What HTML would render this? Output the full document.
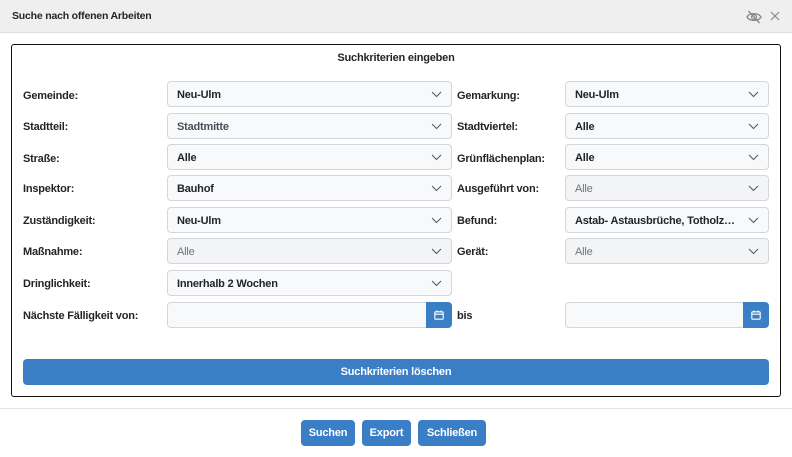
<!DOCTYPE html>
<html><head><meta charset="utf-8"><style>
*{box-sizing:border-box;margin:0;padding:0}
body{width:792px;height:457px;background:#fff;font-family:"Liberation Sans",sans-serif;font-size:11px;color:#212529;position:relative;overflow:hidden;letter-spacing:-0.2px}
.hdr{position:absolute;left:0;top:0;width:792px;height:33px;background:#efefef;border-bottom:1px solid #ddd}
.hdr .t{position:absolute;left:12px;top:10px;font-weight:bold;font-size:10.5px}
.box{position:absolute;left:11px;top:44px;width:770px;height:353px;border:1px solid #111;border-radius:3px}
.ttl{position:absolute;left:0;width:792px;top:52px;text-align:center;font-weight:bold}
.lbl{position:absolute;font-weight:bold;margin-top:1px}
.sel{position:absolute;height:26px;background:#f8f9fa;border:1px solid #d3d6da;border-radius:4px;font-weight:bold;padding:7px 0 0 9px}
.sel.d{color:#6c757d;font-weight:normal;background:#f3f4f5}
.sel svg{position:absolute;right:9px;top:9px}
.sel svg path{stroke:#555;stroke-width:1}
.inp{position:absolute;height:26px;background:#f8f9fa;border:1px solid #d3d6da;border-radius:4px}
.cb{position:absolute;width:26px;height:26px;background:#3a7fc6;border-radius:0 4px 4px 0}
.cb svg{position:absolute;left:8px;top:8px}
.btn{position:absolute;background:#3a7fc6;color:#fff;font-weight:bold;border-radius:4px;text-align:center;line-height:26px;height:26px}
.sep{position:absolute;left:0;top:408px;width:792px;border-top:1px solid #e3e3e3}
</style></head><body>
<div class="hdr"><span class="t">Suche nach offenen Arbeiten</span>
<svg style="position:absolute;left:745px;top:9px" width="18" height="16" viewBox="0 0 18 16" fill="none" stroke="#888" stroke-width="1.3"><path d="M2 8C4.5 3.5 13.5 3.5 16 8C13.5 12.5 4.5 12.5 2 8Z"/><circle cx="9" cy="8" r="2.4"/><path d="M3.5 2L14.5 14"/></svg>
<svg style="position:absolute;left:770px;top:11px" width="10" height="10" viewBox="0 0 10 10" stroke="#888" stroke-width="1.2"><path d="M1 1L9 9M9 1L1 9"/></svg>
</div>
<div class="box"></div>
<div class="ttl">Suchkriterien eingeben</div>

<div class="lbl" style="left:23px;top:89px">Gemeinde:</div>
<div class="lbl" style="left:23px;top:120px">Stadtteil:</div>
<div class="lbl" style="left:23px;top:152px">Straße:</div>
<div class="lbl" style="left:23px;top:182px">Inspektor:</div>
<div class="lbl" style="left:23px;top:214px">Zuständigkeit:</div>
<div class="lbl" style="left:23px;top:245px">Maßnahme:</div>
<div class="lbl" style="left:23px;top:277px">Dringlichkeit:</div>
<div class="lbl" style="left:23px;top:309px">Nächste Fälligkeit von:</div>

<div class="lbl" style="left:457px;top:89px">Gemarkung:</div>
<div class="lbl" style="left:457px;top:120px">Stadtviertel:</div>
<div class="lbl" style="left:457px;top:152px">Grünflächenplan:</div>
<div class="lbl" style="left:457px;top:182px">Ausgeführt von:</div>
<div class="lbl" style="left:457px;top:214px">Befund:</div>
<div class="lbl" style="left:457px;top:245px">Gerät:</div>
<div class="lbl" style="left:457px;top:309px">bis</div>

<div class="sel" style="left:167px;top:81px;width:285px">Neu-Ulm<svg width="11" height="7" viewBox="0 0 11 7" fill="none"><path d="M1 1L5.5 5.5L10 1"/></svg></div>
<div class="sel" style="left:167px;top:113px;width:285px;color:#495057">Stadtmitte<svg width="11" height="7" viewBox="0 0 11 7" fill="none"><path d="M1 1L5.5 5.5L10 1"/></svg></div>
<div class="sel" style="left:167px;top:144px;width:285px">Alle<svg width="11" height="7" viewBox="0 0 11 7" fill="none"><path d="M1 1L5.5 5.5L10 1"/></svg></div>
<div class="sel" style="left:167px;top:175px;width:285px">Bauhof<svg width="11" height="7" viewBox="0 0 11 7" fill="none"><path d="M1 1L5.5 5.5L10 1"/></svg></div>
<div class="sel" style="left:167px;top:207px;width:285px">Neu-Ulm<svg width="11" height="7" viewBox="0 0 11 7" fill="none"><path d="M1 1L5.5 5.5L10 1"/></svg></div>
<div class="sel d" style="left:167px;top:238px;width:285px">Alle<svg width="11" height="7" viewBox="0 0 11 7" fill="none"><path d="M1 1L5.5 5.5L10 1"/></svg></div>
<div class="sel" style="left:167px;top:270px;width:285px">Innerhalb 2 Wochen<svg width="11" height="7" viewBox="0 0 11 7" fill="none"><path d="M1 1L5.5 5.5L10 1"/></svg></div>

<div class="sel" style="left:565px;top:81px;width:204px">Neu-Ulm<svg width="11" height="7" viewBox="0 0 11 7" fill="none"><path d="M1 1L5.5 5.5L10 1"/></svg></div>
<div class="sel" style="left:565px;top:113px;width:204px">Alle<svg width="11" height="7" viewBox="0 0 11 7" fill="none"><path d="M1 1L5.5 5.5L10 1"/></svg></div>
<div class="sel" style="left:565px;top:144px;width:204px">Alle<svg width="11" height="7" viewBox="0 0 11 7" fill="none"><path d="M1 1L5.5 5.5L10 1"/></svg></div>
<div class="sel d" style="left:565px;top:175px;width:204px">Alle<svg width="11" height="7" viewBox="0 0 11 7" fill="none"><path d="M1 1L5.5 5.5L10 1"/></svg></div>
<div class="sel" style="left:565px;top:207px;width:204px">Astab- Astausbrüche, Totholz…<svg width="11" height="7" viewBox="0 0 11 7" fill="none"><path d="M1 1L5.5 5.5L10 1"/></svg></div>
<div class="sel d" style="left:565px;top:238px;width:204px">Alle<svg width="11" height="7" viewBox="0 0 11 7" fill="none"><path d="M1 1L5.5 5.5L10 1"/></svg></div>

<div class="inp" style="left:167px;top:302px;width:262px"></div>
<div class="cb" style="left:426px;top:302px"><svg width="10" height="10" viewBox="0 0 10 10" fill="none" stroke="#fff" stroke-width="1.1"><rect x="0.8" y="1.8" width="8.4" height="7.4" rx="1"/><path d="M0.8 4.2H9.2M3 0.5V2.5M7 0.5V2.5"/></svg></div>
<div class="inp" style="left:565px;top:302px;width:180px"></div>
<div class="cb" style="left:743px;top:302px"><svg width="10" height="10" viewBox="0 0 10 10" fill="none" stroke="#fff" stroke-width="1.1"><rect x="0.8" y="1.8" width="8.4" height="7.4" rx="1"/><path d="M0.8 4.2H9.2M3 0.5V2.5M7 0.5V2.5"/></svg></div>

<div class="btn" style="left:23px;top:359px;width:746px">Suchkriterien löschen</div>
<div class="sep"></div>
<div class="btn" style="left:301px;top:420px;width:54px">Suchen</div>
<div class="btn" style="left:362px;top:420px;width:49px">Export</div>
<div class="btn" style="left:418px;top:420px;width:68px">Schließen</div>
</body></html>
